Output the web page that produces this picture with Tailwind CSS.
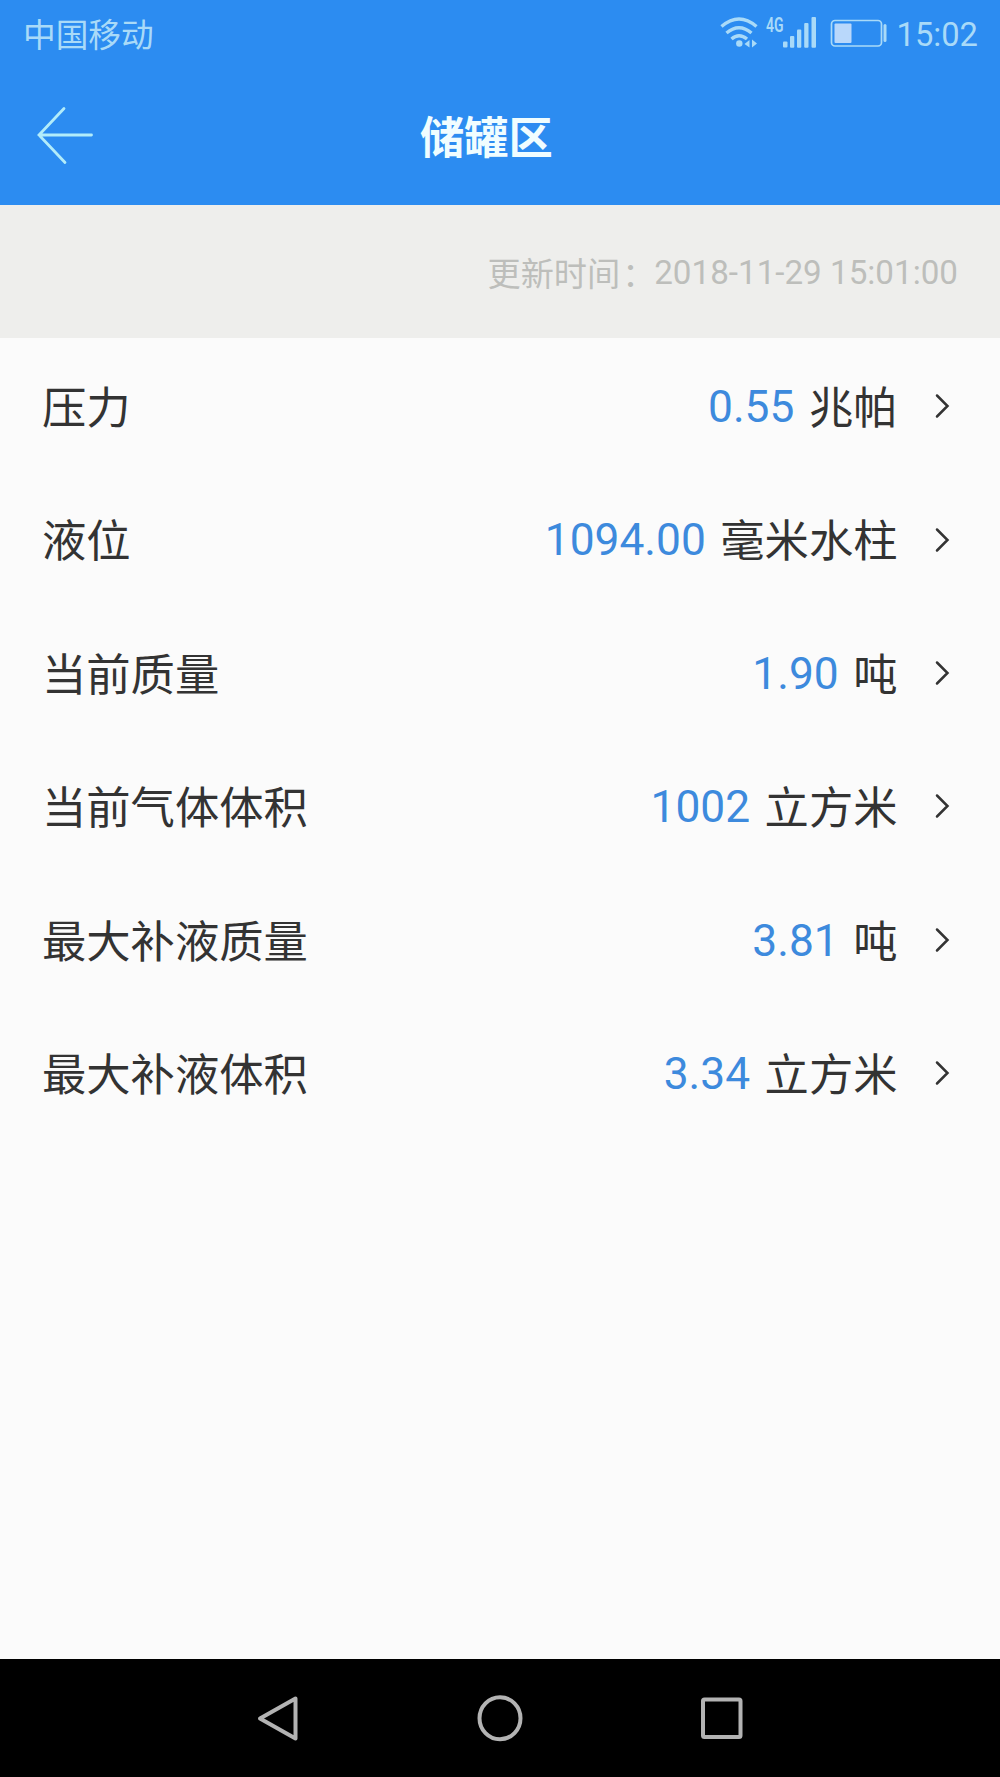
<!DOCTYPE html>
<html lang="zh-CN">
<head>
<meta charset="UTF-8">
<title>储罐区</title>
<script src="https://cdn.jsdelivr.net/npm/@tailwindcss/browser@4"></script>
</head>
<body class="flex h-[1777px] w-[1000px] flex-col overflow-hidden bg-[#fbfbfb] font-['Roboto','Noto_Sans_CJK_SC',sans-serif] text-[#333]">
  <header class="flex h-[205px] shrink-0 flex-col bg-[#2c8cf1]">
    <div class="flex h-[69px] items-center pr-[22px] pl-[23px] text-[32.7px] leading-none text-[#a9daf8]">
      <span class="pt-1">中国移动</span>
      <!-- Wi-Fi -->
      <svg class="ml-auto" width="38" height="69" viewBox="719 0 38 69" fill="none" stroke="#a9daf8" stroke-width="3.4">
        <path d="M720.5 26.5Q738 11.500 755.500 26.500"/>
        <path d="M725.500 33Q738 22.500 750.500 33"/>
        <path d="M730.500 39Q738 32.500 746 39"/>
        <circle cx="738.300" cy="43.500" r="3.200" fill="#a9daf8" stroke="none"/>
        <path d="M743.500 44l5-4v7.500zM756 43.500l-5-4v8z" fill="#a9daf8" stroke="none"/>
      </svg>
      <!-- Mobile signal -->
      <div class="relative ml-2">
        <svg width="52" height="69" viewBox="765 0 52 69" fill="#a9daf8">
          <rect x="782" y="41.500" width="4.500" height="6" rx="1"/>
          <rect x="789" y="36" width="4.300" height="11.800" rx="1"/>
          <rect x="796" y="29.500" width="4.300" height="18.300" rx="1"/>
          <rect x="803.200" y="23" width="4.300" height="24.800" rx="1"/>
          <rect x="810.500" y="17" width="4.500" height="30.800" rx="1"/>
        </svg>
        <span class="absolute top-[14.500px] left-0 origin-left scale-x-[0.7] text-[20px] leading-none font-semibold">4G</span>
      </div>
      <!-- Battery -->
      <svg class="ml-3" width="59" height="69" viewBox="828.500 0 59 69" fill="none" stroke="#a9daf8">
        <rect x="830" y="20.500" width="50" height="25.500" rx="3.500" stroke-width="1.700"/>
        <rect x="833" y="23.500" width="17" height="19.500" rx="1" fill="#b9d8fb" stroke="none"/>
        <path d="M883.500 25.500v15" stroke-width="3" stroke-linecap="round"/>
      </svg>
      <span class="ml-[8px] pt-0.5">15:02</span>
    </div>
    <div class="flex h-[136px] items-center">
      <svg class="mb-1 ml-[36px]" width="60" height="60" viewBox="36 105 60 60" fill="none" stroke="#b2ecfa" stroke-width="2.800" stroke-linecap="round">
        <path d="M91.500 135H39M64 108.500L39 135L65 162.500"/>
      </svg>
      <h1 class="ml-[324px] pt-[5px] text-[44.300px] leading-none font-bold text-[#f0fdff]">储罐区</h1>
    </div>
  </header>
  <div class="flex h-[133px] shrink-0 items-center justify-end bg-[#eeeeec] pr-[42px] text-[33.200px] leading-none text-[#bdbebb]">
    <span class="pt-[7px]">更新时间</span><span class="w-[34px] pt-[7px] pl-[2px]">：</span><span class="pt-[3px]">2018-11-29 15:01:00</span>
  </div>
  <main class="flex grow flex-col pt-[1.500px] text-[44.300px] leading-none">
    <div class="flex h-[133.400px] items-center pr-[50.500px] pl-[42px]">
      <span class="pt-[6px]">压力</span><span class="ml-auto pt-[2px] text-[#3d8add]">0.55</span><span class="ml-[14.500px] pt-[6px]">兆帕</span>
      <svg class="ml-[36px]" width="16" height="26" viewBox="0 0 16 26" fill="none" stroke="#333" stroke-width="2.500" stroke-linecap="round"><path d="M3 2.500L13.500 13L3 23.500"/></svg>
    </div>
    <div class="flex h-[133.400px] items-center pr-[50.500px] pl-[42px]">
      <span class="pt-[6px]">液位</span><span class="ml-auto pt-[2px] text-[#3d8add]">1094.00</span><span class="ml-[14.500px] pt-[6px]">毫米水柱</span>
      <svg class="ml-[36px]" width="16" height="26" viewBox="0 0 16 26" fill="none" stroke="#333" stroke-width="2.500" stroke-linecap="round"><path d="M3 2.500L13.500 13L3 23.500"/></svg>
    </div>
    <div class="flex h-[133.400px] items-center pr-[50.500px] pl-[42px]">
      <span class="pt-[6px]">当前质量</span><span class="ml-auto pt-[2px] text-[#3d8add]">1.90</span><span class="ml-[14.500px] pt-[6px]">吨</span>
      <svg class="ml-[36px]" width="16" height="26" viewBox="0 0 16 26" fill="none" stroke="#333" stroke-width="2.500" stroke-linecap="round"><path d="M3 2.500L13.500 13L3 23.500"/></svg>
    </div>
    <div class="flex h-[133.400px] items-center pr-[50.500px] pl-[42px]">
      <span class="pt-[6px]">当前气体体积</span><span class="ml-auto pt-[2px] text-[#3d8add]">1002</span><span class="ml-[14.500px] pt-[6px]">立方米</span>
      <svg class="ml-[36px]" width="16" height="26" viewBox="0 0 16 26" fill="none" stroke="#333" stroke-width="2.500" stroke-linecap="round"><path d="M3 2.500L13.500 13L3 23.500"/></svg>
    </div>
    <div class="flex h-[133.400px] items-center pr-[50.500px] pl-[42px]">
      <span class="pt-[6px]">最大补液质量</span><span class="ml-auto pt-[2px] text-[#3d8add]">3.81</span><span class="ml-[14.500px] pt-[6px]">吨</span>
      <svg class="ml-[36px]" width="16" height="26" viewBox="0 0 16 26" fill="none" stroke="#333" stroke-width="2.500" stroke-linecap="round"><path d="M3 2.500L13.500 13L3 23.500"/></svg>
    </div>
    <div class="flex h-[133.400px] items-center pr-[50.500px] pl-[42px]">
      <span class="pt-[6px]">最大补液体积</span><span class="ml-auto pt-[2px] text-[#3d8add]">3.34</span><span class="ml-[14.500px] pt-[6px]">立方米</span>
      <svg class="ml-[36px]" width="16" height="26" viewBox="0 0 16 26" fill="none" stroke="#333" stroke-width="2.500" stroke-linecap="round"><path d="M3 2.500L13.500 13L3 23.500"/></svg>
    </div>
  </main>
  <nav class="flex h-[118px] shrink-0 items-center justify-center gap-[172px] bg-black">
    <svg width="50" height="50" viewBox="252 1693 50 50" fill="none" stroke="#b3b3b3" stroke-width="4" stroke-linejoin="round"><path d="M294.500 1698.500L259 1718.500L294.500 1738.500Z"/></svg>
    <svg width="50" height="50" viewBox="475 1693 50 50" fill="none" stroke="#b3b3b3" stroke-width="4"><ellipse cx="500" cy="1718.200" rx="20.500" ry="21"/></svg>
    <svg width="50" height="50" viewBox="697 1693 50 50" fill="none" stroke="#b3b3b3" stroke-width="4"><rect x="703" y="1699.500" width="37.500" height="37.500" rx="1.500"/></svg>
  </nav>
</body>
</html>
